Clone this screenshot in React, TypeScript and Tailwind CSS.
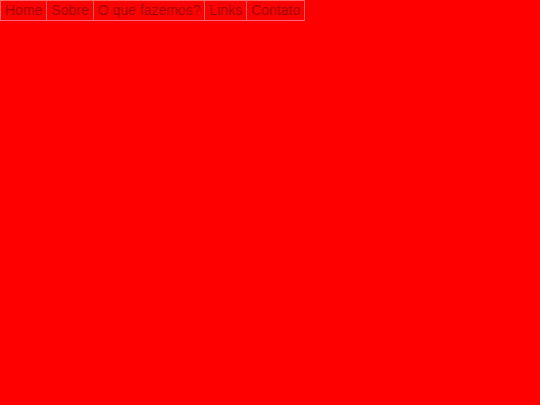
export default function App() {
  const items = ['Home', 'Sobre', 'O que fazemos?', 'Links', 'Contato'];
  return (
    <div className="min-h-screen w-full bg-[#ff0000] font-['Liberation_Sans',Arial,sans-serif]">
      <ul className="flex">
        {items.map((item, i) => (
          <li
            key={item}
            className={`border border-[#ff6666] ${i > 0 ? 'border-l-0' : ''} px-1 py-px text-[14px] leading-[17px] text-[#a00000]`}
          >
            <a href="#">{item}</a>
          </li>
        ))}
      </ul>
    </div>
  );
}
